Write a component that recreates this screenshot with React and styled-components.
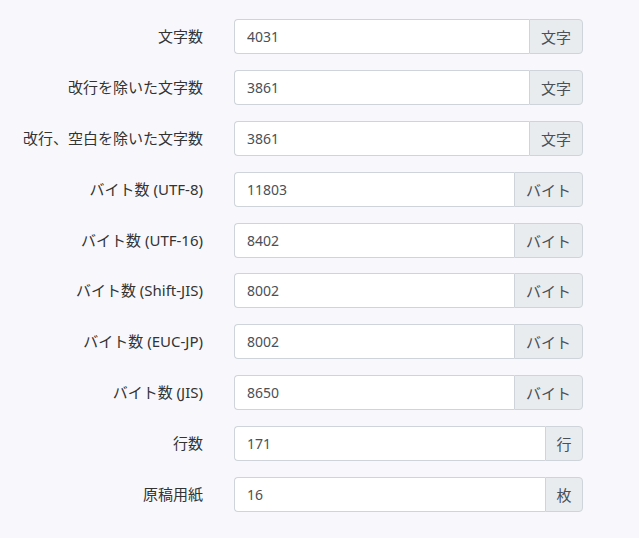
import React from 'react';
import styled, {createGlobalStyle} from 'styled-components';

const GlobalStyle = createGlobalStyle`
  html, body {
    margin: 0;
    background: #f8f8fc;
  }
  body {
    font-family: "Noto Sans", "Noto Sans CJK JP", sans-serif;
    font-size: 15px;
    color: #212529;
  }
`;

const Form = styled.div`
  padding-top: 19px;
  width: 583px;
`;

const Row = styled.div`
  display: grid;
  grid-template-columns: 203px 1fr;
  column-gap: 31px;
  align-items: center;
  margin-bottom: 15.9px;
`;

const Label = styled.label`
  text-align: right;
  white-space: nowrap;
  color: #333;
  line-height: 21px;
`;

const Group = styled.div`
  display: flex;
  height: 35px;
`;

const Field = styled.input`
  flex: 1;
  min-width: 0;
  box-sizing: border-box;
  height: 35px;
  padding: 6px 12px;
  font-family: inherit;
  font-size: 14px;
  color: #495057;
  background: #fff;
  border: 1px solid #ced4da;
  border-right: none;
  border-radius: 4px 0 0 4px;
  outline: none;
`;

const Addon = styled.span`
  box-sizing: border-box;
  width: ${p => p.w}px;
  display: flex;
  align-items: center;
  justify-content: center;
  color: #495057;
  background: #e9ecef;
  border: 1px solid #ced4da;
  border-radius: 0 4px 4px 0;
`;

const rows = [
  ['文字数', '4031', '文字', 54],
  ['改行を除いた文字数', '3861', '文字', 54],
  ['改行、空白を除いた文字数', '3861', '文字', 54],
  ['バイト数 (UTF-8)', '11803', 'バイト', 69],
  ['バイト数 (UTF-16)', '8402', 'バイト', 69],
  ['バイト数 (Shift-JIS)', '8002', 'バイト', 69],
  ['バイト数 (EUC-JP)', '8002', 'バイト', 69],
  ['バイト数 (JIS)', '8650', 'バイト', 69],
  ['行数', '171', '行', 38],
  ['原稿用紙', '16', '枚', 38],
];

export default function App() {
  return (
    <>
      <GlobalStyle />
      <Form>
        {rows.map(([label, value, unit, w]) => (
          <Row key={label}>
            <Label>{label}</Label>
            <Group>
              <Field readOnly value={value} />
              <Addon w={w}>{unit}</Addon>
            </Group>
          </Row>
        ))}
      </Form>
    </>
  );
}
